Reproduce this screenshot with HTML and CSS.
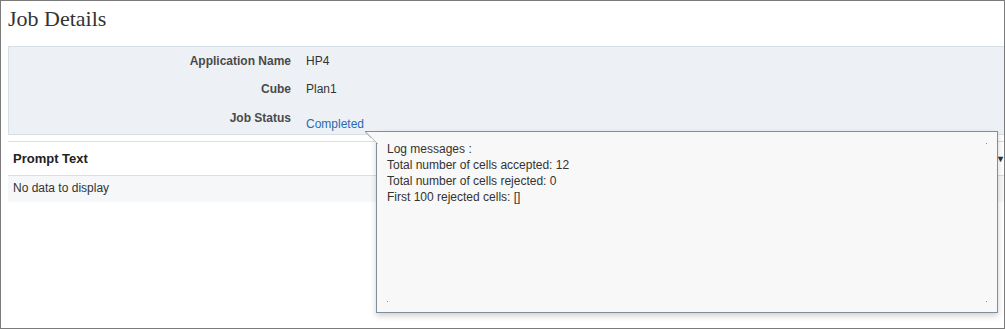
FILE: index.html
```html
<!DOCTYPE html>
<html lang="en">
<head>
  <meta charset="UTF-8">
  <title>Job Details</title>
  <link rel="stylesheet" href="styles.css">
</head>
<body>

  <div class="pagina">
    <h1 class="titulo">Job Details</h1>

    <!-- Datos del job -->
    <div class="panel">
      <div class="fila">
        <span class="etiqueta">Application Name</span>
        <span class="valor">HP4</span>
      </div>
      <div class="fila">
        <span class="etiqueta">Cube</span>
        <span class="valor">Plan1</span>
      </div>
      <div class="fila fila-estado">
        <span class="etiqueta">Job Status</span>
        <a class="valor enlace" href="#">Completed</a>
      </div>
    </div>

    <!-- Tabla de prompts -->
    <div class="tabla">
      <div class="tabla-cabecera">
        <span>Prompt Text</span>
        <span class="menu-col">&#8942;&#9662;</span>
      </div>
      <div class="tabla-vacia">No data to display</div>
    </div>

    <!-- Nota emergente del estado -->
    <div class="nota">
      <div class="nota-flecha"></div>
      <p>Log messages :</p>
      <p>Total number of cells accepted: 12</p>
      <p>Total number of cells rejected: 0</p>
      <p>First 100 rejected cells: []</p>
      <i class="punto p1"></i>
      <i class="punto p2"></i>
      <i class="punto p3"></i>
    </div>
  </div>

</body>
</html>
```

FILE: styles.css
```css
body {
  margin: 0;
  padding: 0;
  background-color: #ffffff;
  font-family: 'Liberation Sans', Arial, sans-serif;
  font-size: 12px;
  color: #333333;
}

.pagina {
  position: relative;
  width: 1005px;
  height: 329px;
  box-sizing: border-box;
  border: 1px solid #7b7b7b;
  padding: 0 0 0 7px;
  overflow: hidden;
}

.titulo {
  margin: 0;
  padding: 5px 0 0 0;
  height: 45px;
  box-sizing: border-box;
  font-family: 'Liberation Serif', Georgia, serif;
  font-weight: normal;
  font-size: 22px;
  color: #333333;
}

.panel {
  background-color: #edf1f5;
  border: 1px solid #d6dee6;
  border-right: none;
  height: 89px;
  box-sizing: border-box;
}

.fila {
  display: flex;
  align-items: center;
  height: 28px;
}

.fila-estado {
  align-items: flex-start;
  padding-top: 8px;
  box-sizing: border-box;
  line-height: 14px;
}

.etiqueta {
  width: 282px;
  text-align: right;
  font-weight: bold;
  color: #4a4a4a;
  padding-right: 15px;
}

.valor {
  color: #333333;
}

.enlace {
  color: #2a6ab0;
  text-decoration: none;
  margin-top: 6px;
}

.tabla {
  margin-top: 6px;
  border-top: 1px solid #d6dee6;
}

.tabla-cabecera {
  display: flex;
  justify-content: space-between;
  align-items: center;
  height: 33px;
  padding-left: 5px;
  font-size: 13px;
  font-weight: bold;
  color: #222222;
  border-bottom: 1px solid #d6dee6;
}

.menu-col {
  font-size: 10px;
  color: #333333;
  padding-right: 1px;
}

.tabla-vacia {
  background-color: #f5f7f9;
  height: 26px;
  line-height: 24px;
  padding-left: 5px;
  color: #333333;
}

/* Nota flotante */
.nota {
  position: absolute;
  left: 375px;
  top: 130px;
  width: 622px;
  height: 182px;
  box-sizing: border-box;
  background-color: #f8f8f8;
  border: 1px solid #7f8e9d;
  box-shadow: 0 3px 6px rgba(0, 0, 0, 0.18);
  padding: 9px 10px;
}

.nota p {
  margin: 0;
  line-height: 16px;
  color: #333333;
}

.nota-flecha {
  position: absolute;
  left: -12px;
  top: -1px;
  width: 13px;
  height: 13px;
  background: linear-gradient(to top right, transparent 48%, #b9c3cd 48%, #b9c3cd 54%, #f8f8f8 54%);
  border-top: 1px solid #7f8e9d;
  box-sizing: border-box;
}

.punto {
  position: absolute;
  width: 1px;
  height: 1px;
  background-color: #8a8a8a;
}

.p1 { right: 10px; top: 11px; }
.p2 { left: 10px; bottom: 10px; }
.p3 { right: 10px; bottom: 10px; }
```
